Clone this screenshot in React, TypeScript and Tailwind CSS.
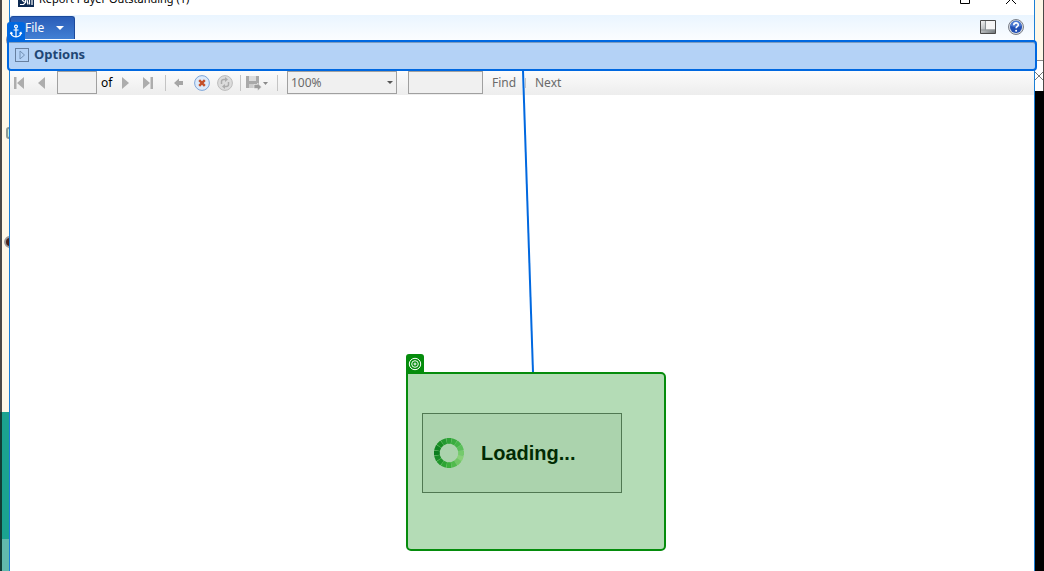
import React from 'react';

function AnchorIcon() {
  return (
    <svg viewBox="0 0 18 18" className="size-[18px]" fill="none" stroke="#fff" strokeWidth="1.2" aria-hidden="true">
      <circle cx="9" cy="4.6" r="1.4" />
      <path d="M9 6v9M6.5 8h5M4 10.5c.2 2.800 2 4.200 5 4.500 3-.3 4.800-1.700 5-4.500M3.300 12l.8-1.600 1.500 1M14.700 12l-.8-1.600-1.500 1" />
    </svg>
  );
}

function TargetIcon() {
  return (
    <svg viewBox="0 0 14 14" className="size-[14px]" fill="none" stroke="#fff" strokeWidth="1" aria-hidden="true">
      <circle cx="7" cy="7" r="5.700" />
      <circle cx="7" cy="7" r="3.300" />
      <circle cx="7" cy="7" r="1" />
    </svg>
  );
}

function LogoIcon() {
  return (
    <svg viewBox="0 0 16 16" className="size-4 shrink-0" aria-hidden="true">
      <path d="M0 0h16v16H0z" fill="#0d2a52" />
      <path d="M2 13.500h3.500l2-2V9M4 9l2.500 2M9 9l1 4.500M11.500 9v4.500M14 8v6" stroke="#fff" strokeWidth="1.200" fill="none" />
    </svg>
  );
}

function Spinner() {
  const colors = [
    '#3fae49', '#4fba55', '#5fc862', '#7ed67a', '#a5e696', '#c2f0a8', '#a0e28c', '#70d068',
    '#52c04f', '#3eb044', '#2c9a38', '#1f8b31', '#0e7826', '#14802a', '#22902f', '#32a040',
  ];
  return (
    <svg viewBox="-16 -16 32 32" className="size-8 shrink-0" aria-hidden="true">
      <circle r="12" fill="none" stroke="#a9dba4" strokeWidth="5" />
      {colors.map((c, i) => (
        <path key={i} d="M-2.600 -15 L2.600 -15 L1.700 -9.200 L-1.700 -9.200Z" fill={c} transform={`rotate(${i * 22.5})`} />
      ))}
    </svg>
  );
}

function Separator({ className = '' }: { className?: string }) {
  return <span className={`h-4 w-px shrink-0 bg-[#c4c4c4] ${className}`} />;
}

function ToolButton({ label, className, children }: { label: string; className: string; children: React.ReactNode }) {
  return (
    <button type="button" aria-label={label} className={`flex h-4 shrink-0 items-center ${className}`}>
      {children}
    </button>
  );
}

function TitleBar() {
  return (
    <header className="flex h-[15px] items-end justify-between overflow-hidden pr-[18px] pl-2">
      <div className="mb-2 flex items-end gap-[5px]">
        <LogoIcon />
        <h1 className="text-[11px] leading-4 whitespace-nowrap text-black">Report Payer Outstanding (1)</h1>
      </div>
      <div className="mb-[11px] flex gap-9">
        <button type="button" aria-label="Maximize">
          <svg viewBox="0 0 10 10" className="size-[10px]"><path d="M.5.5h9v9h-9z" fill="none" stroke="#000" /></svg>
        </button>
        <button type="button" aria-label="Close">
          <svg viewBox="0 0 10 10" className="size-[10px]"><path d="M0 0l10 10M10 0L0 10" stroke="#000" /></svg>
        </button>
      </div>
    </header>
  );
}

function Ribbon() {
  return (
    <div className="flex h-[25px] items-start justify-between bg-linear-to-b from-[#eaf5ff] to-[#fbfdff] pr-[10px]">
      <button
        type="button"
        className="mt-px flex h-[23px] w-[65px] items-center gap-3 rounded-t-[3px] border border-b-0 border-[#1c4a9c] bg-linear-to-b from-[#2a5db8] to-[#4280d4] pl-[14px] text-[12px] text-white"
      >
        File
        <svg viewBox="0 0 8 4" className="h-1 w-2"><path d="M0 0h8L4 4z" fill="#fff" /></svg>
      </button>
      <div className="flex items-center gap-3 pt-1">
        <button type="button" aria-label="Toggle pane">
          <svg viewBox="0 0 16 14" className="h-[14px] w-4">
            <defs>
              <linearGradient id="pane" x1="0" y1="0" x2="1" y2="1">
                <stop offset="0" stopColor="#fafafa" />
                <stop offset="1" stopColor="#6a7175" />
              </linearGradient>
            </defs>
            <path d="M.5.5h15v13H.5z" fill="url(#pane)" stroke="#4a4a4a" />
            <path d="M6 1h9v8.500H6z" fill="#f6f6f6" />
            <path d="M5.500 1v9M1 10h14" stroke="#8d9396" />
          </svg>
        </button>
        <button type="button" aria-label="Help">
          <svg viewBox="0 0 16 16" className="size-4">
            <circle cx="8" cy="8" r="7.500" fill="#d5dae2" stroke="#7b7f88" />
            <circle cx="8" cy="8" r="6" fill="#2350b4" />
            <path d="M2.500 7a5.500 5.500 0 0 1 11 0q-5 2-11 0z" fill="#4d7ad2" />
            <path d="M5.800 6.200c0-3 4.500-3 4.500-.3 0 1.500-2.200 1.600-2.200 3.400" fill="none" stroke="#fff" strokeWidth="1.600" />
            <circle cx="8.100" cy="11.700" r="1" fill="#fff" />
          </svg>
        </button>
      </div>
    </div>
  );
}

function OptionsBar() {
  return (
    <div className="relative z-10 -mx-[3px]">
      <button
        type="button"
        className="flex h-[31px] w-full items-center gap-[5px] rounded-[4px] rounded-tl-none border-2 border-[#0068e0] bg-[#b4d2f6] pb-[2px] pl-[6px] text-[13px] font-bold text-[#1f4674] shadow-[inset_0_1px_0_#7d9cc0]"
      >
        <svg viewBox="0 0 14 14" className="size-[14px]" fill="none">
          <path d="M.5.5h13v13H.5z" stroke="#1b2f4a" strokeDasharray="1 1" />
          <path d="M5 3l4.500 4L5 11z" stroke="#7391b5" />
        </svg>
        Options
      </button>
      <span className="absolute bottom-full left-0 rounded-t-[3px] bg-[#0068e0]">
        <AnchorIcon />
      </span>
    </div>
  );
}

function Toolbar() {
  return (
    <div className="flex h-6 items-center bg-linear-to-b from-[#fbfbfb] to-[#ededed] pb-px pl-[3px] text-[12px] text-[#6a6a6a]">
      <ToolButton label="First page" className="w-3">
        <svg viewBox="0 0 12 12" className="size-3" fill="#adadad"><path d="M1 0h2.500v12H1zM11 0v12L4 6z" /></svg>
      </ToolButton>
      <ToolButton label="Previous page" className="ml-3 w-3">
        <svg viewBox="0 0 12 12" className="size-3" fill="#adadad"><path d="M8 0v12L1 6z" /></svg>
      </ToolButton>
      <input aria-label="Page" className="ml-2 h-[23px] w-10 min-w-0 border border-[#a0a0a0] bg-[#f0f0f0] px-1" />
      <span className="ml-1 w-3 text-black">of</span>
      <ToolButton label="Next page" className="ml-2 w-3">
        <svg viewBox="0 0 12 12" className="size-3" fill="#adadad"><path d="M1 0v12l7-6z" /></svg>
      </ToolButton>
      <ToolButton label="Last page" className="ml-2 w-3">
        <svg viewBox="0 0 12 12" className="size-3" fill="#adadad"><path d="M2 0v12l7-6zM9.500 0H12v12H9.500z" /></svg>
      </ToolButton>
      <Separator className="ml-3" />
      <ToolButton label="Back" className="ml-2 w-3">
        <svg viewBox="0 0 12 12" className="size-3"><path d="M0 6l5-4.500V4h4v4H5v2.500z" fill="#a6a6a6" /></svg>
      </ToolButton>
      <ToolButton label="Stop" className="ml-2 w-4">
        <svg viewBox="0 0 16 16" className="size-4">
          <circle cx="8" cy="8" r="7.400" fill="#dceafb" stroke="#7da4d8" />
          <path d="M5.200 5.200l5.600 5.600M10.800 5.200l-5.600 5.600" stroke="#c4502a" strokeWidth="2.400" />
        </svg>
      </ToolButton>
      <ToolButton label="Refresh" className="ml-[7px] w-4">
        <svg viewBox="0 0 16 16" className="size-4">
          <circle cx="8" cy="8" r="7.400" fill="#dcdcdc" stroke="#bcbcbc" />
          <path d="M4.500 9V6.500Q4.500 4.500 7 4.500h1.500M11.500 7v2.500q0 2-2.500 2H7.500" fill="none" stroke="#acacac" strokeWidth="1.500" />
          <path d="M8 2l3 2.500L8 7zM8 9l-3 2.500L8 14z" fill="#acacac" />
        </svg>
      </ToolButton>
      <Separator className="ml-[7px]" />
      <ToolButton label="Export" className="ml-[5px] w-6">
        <svg viewBox="0 0 24 16" className="h-4 w-6">
          <path d="M0 1h13v12H0z" fill="#a9a9a9" />
          <path d="M3 1h7v5H3z" fill="#dcdcdc" />
          <path d="M3 9h6v4H3z" fill="#cccccc" />
          <path d="M8 9.500h3.500V8l4 4-4 4v-2.500H8z" fill="#9c9c9c" stroke="#f3f3f3" strokeWidth=".6" />
          <path d="M17 7h5l-2.500 3z" fill="#8a8a8a" />
        </svg>
      </ToolButton>
      <Separator className="ml-[7px]" />
      <span className="relative ml-[9px] flex shrink-0">
        <select aria-label="Zoom" className="h-[23px] w-[110px] appearance-none border border-[#a0a0a0] bg-[#f0f0f0] px-[3px] text-[12px]">
          <option>100%</option>
        </select>
        <svg viewBox="0 0 6 3" className="pointer-events-none absolute top-[10px] right-1 h-[3px] w-[6px]"><path d="M0 0h6L3 3z" fill="#555" /></svg>
      </span>
      <input aria-label="Search text" className="ml-[11px] h-[23px] w-[75px] min-w-0 border border-[#a0a0a0] bg-[#f0f0f0] px-1" />
      <button type="button" className="ml-[9px] w-6">Find</button>
      <Separator className="ml-[9px] h-[10px]" />
      <button type="button" className="ml-[9px]">Next</button>
    </div>
  );
}

function LoadingPanel() {
  return (
    <div className="relative w-[200px]">
      <div role="status" className="flex h-20 items-center gap-4 border border-[#707070] bg-[#f2f2f2] pl-[10px] font-['Liberation_Sans',Arial,sans-serif] text-[20px] font-bold text-black">
        <Spinner />
        Loading...
      </div>
      <div className="absolute -top-[41px] -right-11 -bottom-[58px] -left-4 rounded-[5px] rounded-tl-none border-2 border-[#058c0c] bg-[#058c0c]/30">
        <span className="absolute bottom-full -left-[2px] flex h-5 w-[18px] items-center justify-center rounded-t-[3px] bg-[#058c0c]">
          <TargetIcon />
        </span>
      </div>
    </div>
  );
}

function LeftBackdrop() {
  return (
    <div className="flex w-[9px] shrink-0">
      <div className="flex w-[2px] flex-col">
        <span className="h-[412px] bg-[#4b4947]" />
        <span className="flex-1 bg-[#123d36]" />
      </div>
      <div className="flex flex-1 flex-col overflow-hidden bg-[#fef8e8]">
        <span className="mt-8 ml-1 h-4 w-4 rounded-full bg-[#8f8a9e]" />
        <span className="mt-[79px] ml-1 h-3 w-4 rounded-[3px] border-2 border-[#8b9a95] bg-[#c8f2df]" />
        <span className="mt-[97px] ml-[2px] h-3 w-3 rounded-full border-2 border-[#9a9a9a] bg-[#4a2219]" />
        <span className="mt-[164px] h-[127px] shrink-0 bg-[#1ba390]" />
        <span className="flex-1 bg-[#62b9ad]" />
      </div>
    </div>
  );
}

function RightBackdrop() {
  return (
    <div className="flex w-[9px] shrink-0 flex-col bg-black">
      <div className="flex h-[91px] border-r-2 border-[#4b4947]">
        <div className="flex flex-1 flex-col bg-[#fef8e8]">
          <div className="mt-[60px] flex flex-1 items-center justify-center border-t border-[#8a8a8a] bg-white">
            <svg viewBox="0 0 8 8" className="size-2 shrink-0"><path d="M0 0l8 8M8 0L0 8" stroke="#777" /></svg>
          </div>
        </div>
      </div>
    </div>
  );
}

export default function App() {
  return (
    <div className="flex min-h-screen overflow-hidden bg-white font-['Noto_Sans','Open_Sans',sans-serif]">
      <LeftBackdrop />
      <div className="flex min-w-0 flex-1 flex-col border-x border-[#1b7fd6]">
        <TitleBar />
        <Ribbon />
        <OptionsBar />
        <div className="relative flex flex-1 flex-col">
          <Toolbar />
          <main className="flex flex-1 items-start justify-center pt-[318px]">
            <LoadingPanel />
          </main>
          <svg viewBox="0 0 12 301" className="pointer-events-none absolute top-0 left-1/2 h-[301px] w-3" aria-hidden="true">
            <path d="M1 0L11 301" stroke="#0068e0" strokeWidth="2" />
          </svg>
        </div>
      </div>
      <RightBackdrop />
    </div>
  );
}
